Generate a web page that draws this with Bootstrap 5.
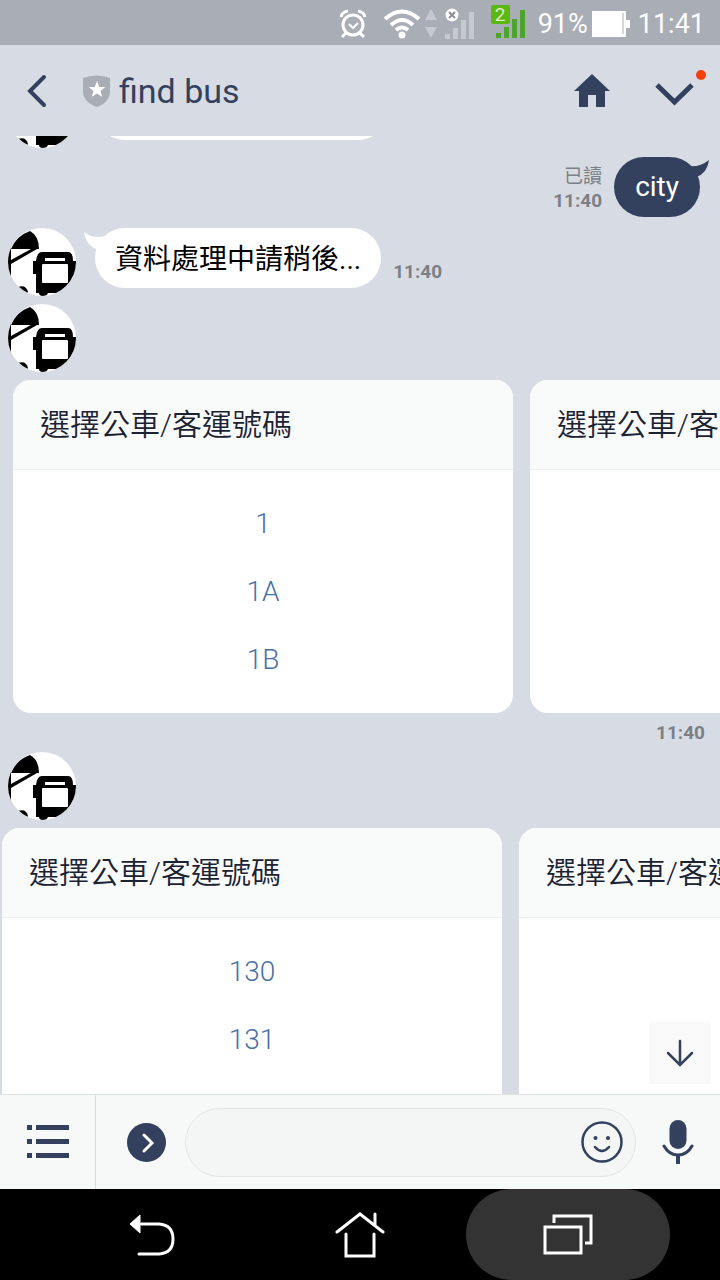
<!DOCTYPE html>
<html lang="zh-Hant">
<head>
<meta charset="utf-8">
<meta name="viewport" content="width=device-width, initial-scale=1">
<title>find bus</title>
<link href="https://cdn.jsdelivr.net/npm/bootstrap@5.3.0/dist/css/bootstrap.min.css" rel="stylesheet">
<style>
:root { --navy: #33415e; --sky: #d7dce4; --time: #7b8087; }
body { font-family: Roboto, "Noto Sans CJK TC", sans-serif; background: var(--sky); color: var(--navy); }
svg { display: block; flex: none; }
button { background: none; border: 0; padding: 0; color: inherit; }
.status-bar { height: 45px; background: #a9adb6; color: #fff; font-size: 27px; line-height: 32px; padding: 2px 15px 0 0; }
.sim { width: 35px; height: 33px; }
.sim-no { left: 0; top: 0; width: 19px; height: 19px; background: #5cb811; color: #d9efc6; font-size: 19px; line-height: 20px; border-radius: 2px; }
.chat-head { height: 91px; padding: 0 26px; }
.shield { margin: 0 9px 0 34px; }
.chat-name { font-size: 34px; line-height: 40px; font-weight: 400; }
.more { margin-left: 45px; }
.dot { width: 10px; height: 10px; right: -12px; top: -4px; background: #f5400c; }
.chat { min-height: 0; }
.cut-row { height: 12px; margin-bottom: 9px; }
.avatar { width: 68px; height: 68px; }
.bubble { min-height: 60px; border-radius: 30px; font-size: 28px; line-height: 60px; padding: 0 20px; }
.bubble-in { background: #fff; color: #000; margin-left: 19px; line-height: 56px; padding-top: 4px; }
.bubble-out { background: var(--navy); color: #fff; padding: 0 21px; }
.tail-in { left: -11px; top: 2px; }
.tail-out { right: -9px; top: 1px; }
.stamp { font-size: 19px; line-height: 24px; color: var(--time); }
.msg { padding: 0 8px; }
.msg-sent { padding-right: 20px; margin-bottom: 11px; }
.reel { gap: 17px; padding-left: 13px; }
.reel-moved { padding-left: 2px; }
.pick { flex: 0 0 500px; border: 0; border-radius: 18px; overflow: hidden; background: #fff; }
.pick-title { height: 90px; padding: 0 27px; margin: 0; background: #f9fafa; border-bottom: 1px solid #f0f1f2; color: #1b2233; font-size: 30px; line-height: 90px; font-weight: 350; white-space: nowrap; }
.pick-body { min-height: 243px; padding: 20px 0 19px; }
.pick-body button { height: 68px; font-size: 28px; line-height: 68px; font-weight: 300; color: #4a6fa5; }
.reel-time { height: 39px; padding: 0 15px; line-height: 39px; }
.down { width: 62px; height: 62px; right: 9px; bottom: 10px; background: #f9f9f9; }
.compose { height: 95px; background: #f7f8f8; border-top: 1px solid #dfe2e5; }
.menu-cell { width: 96px; border-right: 1px solid #d9dcdf; }
.expand { margin-left: 31px; }
.voice { margin: 0 26px; }
.entry { height: 69px; margin-left: 19px; }
.entry input { background: #f4f5f5; border: 1px solid #e1e4e7; border-radius: 35px; padding: 0 64px 0 28px; font-size: 28px; }
.smile { right: 13px; top: 13px; }
.sys-nav { height: 91px; background: #000; color: #fff; padding: 0 48px; }
.sys-nav button { margin: 0 2px; border-radius: 46px; }
.sys-nav .pressed { background: #333; }
</style>
</head>
<body>
<svg width="0" height="0" class="position-absolute" aria-hidden="true">
  <symbol id="bus" viewBox="0 0 68 68">
    <clipPath id="round"><circle cx="34" cy="34" r="34"/></clipPath>
    <g clip-path="url(#round)">
      <rect width="68" height="68" fill="#fff"/>
      <path d="M3 21Q8 8 22 3Q31 8 31 21z"/>
      <path d="M0 20h3v12L23 21h6L3 36v20H0z"/>
      <path d="M10 59Q18 56 20 64L17 68z"/>
      <path d="M34 24h26q5 0 5 9h4v13h-3v10l-9 9H40q-1 3-5 3t-4-3h-3V46h-3V33h3q1-9 6-9z"/>
      <rect x="37" y="30" width="20" height="3" fill="#fff"/>
      <rect x="34" y="36" width="26" height="19" rx="1" fill="#fff"/>
    </g>
  </symbol>
</svg>

<div class="d-flex flex-column vh-100 overflow-hidden">
  <div class="status-bar d-flex align-items-center justify-content-end flex-shrink-0">
    <svg width="28" height="30" viewBox="0 0 28 30" fill="none" stroke="#fff" stroke-width="3"><circle cx="14" cy="16" r="10"/><path d="M2 8q1-5 7-6M26 8q-1-5-7-6M7 24l-4 4M21 24l4 4"/><path d="m10 15 4 4 5-5" stroke-width="2"/></svg>
    <svg class="ms-3" width="38" height="30" viewBox="0 0 38 30" fill="none" stroke="#fff" stroke-width="4"><path d="M2 10q17-15 34 0M8 16q11-10 22 0M13 21q6-5 12 0"/><circle cx="19" cy="26" r="3.5" fill="#fff" stroke="none"/></svg>
    <svg class="ms-1" width="12" height="30" viewBox="0 0 12 30" fill="#c6c9cf"><path d="m6 0 6 11H0zM6 29l6-11H0z"/></svg>
    <svg class="ms-2" width="30" height="32" viewBox="0 0 30 32"><path fill="#c6c9cf" d="M0 26h5v5H0zM8 20h5v11H8zM16 12h5v19h-5zM24 4h5v27h-5z"/><circle cx="7" cy="7" r="6.5" fill="#fff"/><path d="m4 4 6 6m0-6-6 6" stroke="#8b9099" stroke-width="2"/></svg>
    <div class="sim position-relative ms-3 mb-1">
      <svg width="35" height="33" viewBox="0 0 35 33" fill="#4da52e"><path d="M5 28h5v5H5zM13 22h5v11h-5zM21 14h5v19h-5zM29 5h5v28h-5z"/></svg>
      <span class="sim-no position-absolute text-center">2</span>
    </div>
    <span class="ms-2 ps-1">91%</span>
    <svg class="ms-1" width="38" height="28" viewBox="0 0 38 28" fill="#fff"><path d="M0 1h34v9h4v8h-4v9H0z"/><path d="M31 3v21" stroke="#a9adb6"/></svg>
    <span class="ms-2">11:41</span>
  </div>

  <header class="chat-head d-flex align-items-center flex-shrink-0">
    <button type="button" aria-label="Back"><svg width="22" height="34" viewBox="0 0 22 34" fill="none" stroke="currentColor" stroke-width="4" stroke-linecap="round"><path d="M18 3 4 17l14 14"/></svg></button>
    <svg class="shield" width="28" height="32" viewBox="0 0 28 32"><path d="M1 3Q14-2 28 3v13q0 11-13 16Q1 27 1 16z" fill="#a9aeb6"/><path d="m15 6 2.300 6h6l-4.800 4 1.800 6-5.300-3.600L9.700 22l1.800-6-4.800-4h6z" fill="#fff"/></svg>
    <h1 class="chat-name m-0 me-auto">find bus</h1>
    <button type="button" aria-label="Home"><svg width="36" height="34" viewBox="0 0 36 34" fill="currentColor"><path d="M18 0 36 17H31v16H22V21H14v12H5V17H0z"/></svg></button>
    <button type="button" class="more position-relative" aria-label="More"><svg width="39" height="34" viewBox="0 0 39 34" fill="none" stroke="currentColor" stroke-width="5"><path d="M2 11 19.500 28 37 11"/></svg><span class="dot position-absolute rounded-circle"></span></button>
  </header>

  <main class="chat flex-grow-1 overflow-hidden position-relative">
    <div class="cut-row msg d-flex align-items-end overflow-hidden">
      <svg class="avatar"><use href="#bus"/></svg>
      <div class="bubble bubble-in col-5 mb-2"></div>
    </div>

    <div class="msg msg-sent d-flex justify-content-end align-items-center">
      <div class="stamp text-end me-2 pe-1 pt-1"><div>已讀</div><div class="fw-bold">11:40</div></div>
      <div class="bubble bubble-out position-relative">city
        <svg class="tail-out position-absolute" width="30" height="24" viewBox="0 0 30 24" fill="#33415e"><path d="M0 5Q16 13 30 2 28 16 17 19L8 20z"/></svg>
      </div>
    </div>

    <div class="msg d-flex align-items-center mb-2">
      <svg class="avatar"><use href="#bus"/></svg>
      <div class="bubble bubble-in position-relative mb-2">資料處理中請稍後...
        <svg class="tail-in position-absolute" width="30" height="22" viewBox="0 0 30 22" fill="#fff"><path d="M0 2Q10 11 28 4L14 20Q2 16 0 2z"/></svg>
      </div>
      <span class="stamp fw-bold ms-2 ps-1 pt-3 mt-1">11:40</span>
    </div>

    <div class="msg mb-2"><svg class="avatar"><use href="#bus"/></svg></div>
    <section class="reel d-flex overflow-hidden">
      <article class="pick">
        <h2 class="pick-title">選擇公車/客運號碼</h2>
        <div class="pick-body d-grid"><button type="button">1</button><button type="button">1A</button><button type="button">1B</button></div>
      </article>
      <article class="pick"><h2 class="pick-title">選擇公車/客運號碼</h2><div class="pick-body"></div></article>
    </section>
    <div class="reel-time stamp fw-bold text-end">11:40</div>

    <div class="msg mb-2"><svg class="avatar"><use href="#bus"/></svg></div>
    <section class="reel reel-moved d-flex overflow-hidden">
      <article class="pick">
        <h2 class="pick-title">選擇公車/客運號碼</h2>
        <div class="pick-body"><button type="button" class="d-block w-100">130</button><button type="button" class="d-block w-100">131</button></div>
      </article>
      <article class="pick"><h2 class="pick-title">選擇公車/客運號碼</h2><div class="pick-body"></div></article>
    </section>
    <button type="button" class="down position-absolute d-flex align-items-center justify-content-center" aria-label="Latest message"><svg width="28" height="28" viewBox="0 0 28 28" fill="none" stroke="currentColor" stroke-width="2.500" stroke-linecap="round"><path d="M14 2v24M2 14l12 12 12-12"/></svg></button>
  </main>

  <form class="compose d-flex align-items-center flex-shrink-0">
    <button type="button" class="menu-cell h-100 d-flex align-items-center justify-content-center" aria-label="Menu"><svg width="42" height="36" viewBox="0 0 42 36" fill="currentColor"><path d="M0 1h5v5H0zM9 1h33v5H9zM0 15h5v5H0zM9 15h33v5H9zM0 29h5v5H0zM9 29h33v5H9z"/></svg></button>
    <button type="button" class="expand" aria-label="Expand"><svg width="39" height="39" viewBox="0 0 39 39"><circle cx="19.500" cy="19.500" r="19.500" fill="currentColor"/><path d="m17 12 8 8-8 8" fill="none" stroke="#fff" stroke-width="3" stroke-linecap="round"/></svg></button>
    <div class="entry position-relative flex-grow-1">
      <input type="text" class="w-100 h-100" aria-label="Message">
      <button type="button" class="smile position-absolute" aria-label="Stickers"><svg width="42" height="42" viewBox="0 0 42 42" fill="none" stroke="currentColor" stroke-width="2.500"><circle cx="21" cy="21" r="19.500"/><path d="M14 26q7 8 14 0" stroke-linecap="round"/><circle cx="14.500" cy="17" r="2" fill="currentColor" stroke="none"/><circle cx="27" cy="17" r="2" fill="currentColor" stroke="none"/></svg></button>
    </div>
    <button type="button" class="voice" aria-label="Voice"><svg width="32" height="44" viewBox="0 0 32 44" fill="none" stroke="currentColor" stroke-width="3"><rect x="7.500" width="17" height="29" rx="8.500" fill="currentColor" stroke="none"/><path d="M2 26q5 9 14 9t14-9" stroke-linecap="round"/><path d="M16 35v9" stroke-width="4"/></svg></button>
  </form>

  <nav class="sys-nav d-flex flex-shrink-0">
    <button type="button" class="flex-fill w-100 d-flex align-items-center justify-content-center" aria-label="System back"><svg width="46" height="42" viewBox="0 0 46 42" fill="none" stroke="currentColor" stroke-width="3"><path d="M12 10h18q14 1 14 15T30 40H10" stroke-linecap="round"/><path d="M1 10 11 1v18z" fill="currentColor" stroke-width="1"/></svg></button>
    <button type="button" class="flex-fill w-100 d-flex align-items-center justify-content-center" aria-label="System home"><svg width="50" height="46" viewBox="0 0 50 46" fill="none" stroke="currentColor" stroke-width="3" stroke-linecap="round"><path d="M2 20 25 2l23 18M40 2v11M11 22v22h28V22"/></svg></button>
    <button type="button" class="pressed flex-fill w-100 d-flex align-items-center justify-content-center" aria-label="Recent apps"><svg width="50" height="42" viewBox="0 0 50 42" fill="none" stroke="currentColor" stroke-width="3"><path d="M2 13h36v26H2zM11 9V2h37v27h-6"/></svg></button>
  </nav>
</div>
<script src="https://cdn.jsdelivr.net/npm/bootstrap@5.3.0/dist/js/bootstrap.bundle.min.js"></script>
</body>
</html>
